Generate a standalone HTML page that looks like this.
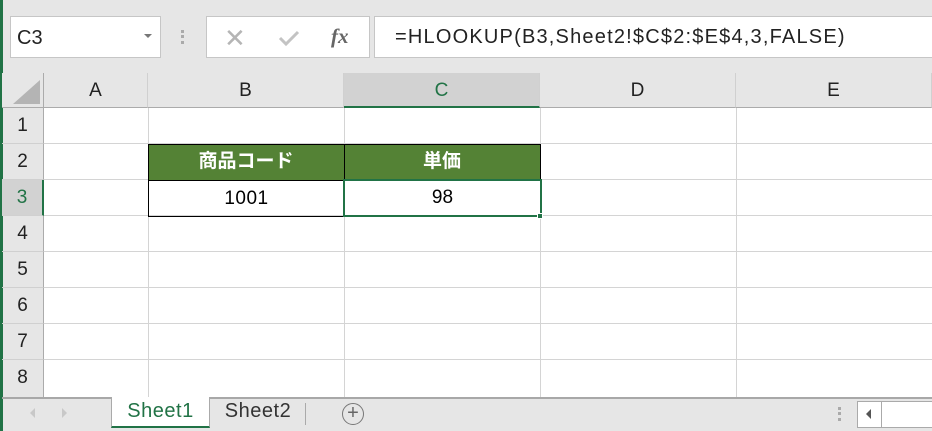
<!DOCTYPE html>
<html><head><meta charset="utf-8"><style>
*{margin:0;padding:0;box-sizing:border-box}
body{width:932px;height:431px;overflow:hidden;background:#e6e6e6;font-family:"Liberation Sans","Noto Sans CJK JP",sans-serif;position:relative}
.abs{position:absolute}
.box{background:#fff;border:1px solid #c6c6c6}
.grid{left:44px;top:108px;width:888px;height:290px;background:#fff}
.vl{position:absolute;top:0;width:1px;height:290px;background:#d4d4d4}
.hl{position:absolute;left:0;width:888px;height:1px;background:#d4d4d4}
.ch{top:73px;height:35px;font-size:19px;color:#222;text-align:center;line-height:35px;border-right:1px solid #d0d0d0;border-bottom:1px solid #ababab}
.rh{left:2px;width:42px;height:36px;font-size:19px;color:#222;text-align:center;line-height:36px;border-bottom:1px solid #d0d0d0;border-right:1px solid #ababab}
</style></head><body>
<div class="abs" style="left:0;top:0;width:3px;height:431px;background:#217346"></div>
<div class="abs box" style="left:10px;top:16px;width:151px;height:42px;font-size:20px;line-height:42px;padding-left:6px;color:#222">C3</div>
<div class="abs" style="left:144px;top:34px;width:0;height:0;border-left:4px solid transparent;border-right:4px solid transparent;border-top:4px solid #777"></div>
<div class="abs" style="left:181px;top:30px;width:3px;height:14px;border-top:3px dotted #aaa;border-bottom:3px dotted #aaa"></div>
<div class="abs" style="left:181px;top:35px;width:3px;height:3px;background:#aaa"></div>
<div class="abs box" style="left:206px;top:16px;width:164px;height:42px"></div>
<div class="abs" style="left:224px;top:26px;font-size:26px;color:#b5b5b5;line-height:24px">✕</div>
<svg class="abs" style="left:277px;top:27px" width="24" height="22"><path d="M3 11 L9 17 L21 5" stroke="#c3c3c3" stroke-width="3" fill="none"/></svg>
<div class="abs" style="left:331px;top:24px;font-size:21px;font-family:'Liberation Serif',serif;font-style:italic;font-weight:bold;color:#666">fx</div>
<div class="abs box" style="left:374px;top:16px;width:560px;height:42px;font-size:20px;line-height:40px;padding-left:20px;color:#222;letter-spacing:1.2px">=HLOOKUP(B3,Sheet2!$C$2:$E$4,3,FALSE)</div>
<div class="abs" style="left:2px;top:73px;width:42px;height:35px;background:#e6e6e6;border-right:1px solid #ababab;border-bottom:1px solid #ababab"></div>
<div class="abs" style="left:13px;top:80px;width:0;height:0;border-left:27px solid transparent;border-bottom:24px solid #b4b4b4"></div>
<div class="abs ch" style="left:44px;width:104px">A</div>
<div class="abs ch" style="left:148px;width:196px">B</div>
<div class="abs ch" style="left:344px;width:196px;background:#d2d2d2;color:#217346;border-bottom:2px solid #217346">C</div>
<div class="abs ch" style="left:540px;width:196px">D</div>
<div class="abs ch" style="left:736px;width:196px">E</div>
<div class="abs rh" style="top:108px">1</div>
<div class="abs rh" style="top:144px">2</div>
<div class="abs rh" style="top:180px;background:#d2d2d2;color:#217346;border-right:2px solid #217346">3</div>
<div class="abs rh" style="top:216px">4</div>
<div class="abs rh" style="top:252px">5</div>
<div class="abs rh" style="top:288px">6</div>
<div class="abs rh" style="top:324px">7</div>
<div class="abs rh" style="top:360px;height:38px">8</div>
<div class="abs grid">
<div class="vl" style="left:104px"></div><div class="vl" style="left:300px"></div><div class="vl" style="left:496px"></div><div class="vl" style="left:692px"></div>
<div class="hl" style="top:35px"></div><div class="hl" style="top:71px"></div><div class="hl" style="top:107px"></div><div class="hl" style="top:143px"></div><div class="hl" style="top:179px"></div><div class="hl" style="top:215px"></div><div class="hl" style="top:251px"></div>
</div>
<div class="abs" style="left:148px;top:144px;width:393px;height:37px;background:#548235;border:1px solid #000"></div>
<div class="abs" style="left:344px;top:144px;width:1px;height:37px;background:#000"></div>
<div class="abs" style="left:148px;top:144px;width:196px;height:36px;color:#fff;font-weight:bold;font-size:19px;text-align:center;line-height:36px">商品コード</div>
<div class="abs" style="left:344px;top:144px;width:196px;height:36px;color:#fff;font-weight:bold;font-size:19px;text-align:center;line-height:36px">単価</div>
<div class="abs" style="left:148px;top:180px;width:197px;height:37px;border:1px solid #000;font-size:19px;text-align:center;line-height:35px;color:#000;letter-spacing:0.5px">1001</div>
<div class="abs" style="left:343px;top:179px;width:199px;height:38px;border:2px solid #217346;font-size:19px;text-align:center;line-height:34px;color:#000">98</div>
<div class="abs" style="left:537px;top:213px;width:6px;height:6px;background:#217346;border:1px solid #fff"></div>
<div class="abs" style="left:2px;top:397px;width:930px;height:2px;background:#a8a8a8"></div>
<div class="abs" style="left:30px;top:408px;width:0;height:0;border-top:5px solid transparent;border-bottom:5px solid transparent;border-right:5px solid #c8c8c8"></div>
<div class="abs" style="left:62px;top:408px;width:0;height:0;border-top:5px solid transparent;border-bottom:5px solid transparent;border-left:5px solid #c8c8c8"></div>
<div class="abs" style="left:111px;top:397px;width:99px;height:31px;background:#fff;border-left:1px solid #aaa;border-right:1px solid #aaa;border-bottom:2px solid #217346;color:#217346;font-size:20px;text-align:center;line-height:28px;letter-spacing:0.5px">Sheet1</div>
<div class="abs" style="left:210px;top:397px;width:96px;height:30px;color:#333;font-size:20px;text-align:center;line-height:28px;letter-spacing:0.5px">Sheet2</div>
<div class="abs" style="left:305px;top:403px;width:1px;height:22px;background:#aaa"></div>
<div class="abs" style="left:342px;top:403px;width:22px;height:22px;border:1.5px solid #777;border-radius:50%;text-align:center;line-height:18px;font-size:20px;color:#666">+</div>
<div class="abs" style="left:838px;top:407px;width:3px;height:14px;border-top:3px dotted #aaa;border-bottom:3px dotted #aaa"></div>
<div class="abs" style="left:838px;top:412px;width:3px;height:3px;background:#aaa"></div>
<div class="abs" style="left:857px;top:401px;width:80px;height:27px;background:#fff;border:1px solid #aaa"></div>
<div class="abs" style="left:881px;top:401px;width:1px;height:27px;background:#aaa"></div>
<div class="abs" style="left:866px;top:409px;width:0;height:0;border-top:5px solid transparent;border-bottom:5px solid transparent;border-right:5px solid #555"></div>
</body></html>
